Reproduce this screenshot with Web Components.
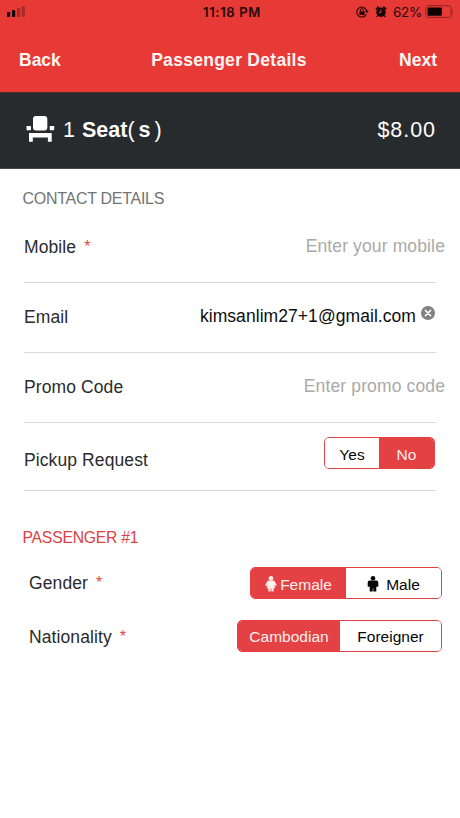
<!DOCTYPE html>
<html lang="en">
<head>
<meta charset="utf-8">
<title>Passenger Details</title>
<style>
  html, body { margin: 0; background: #fff; }
  body { font-family: "Liberation Sans", Arial, sans-serif; }
</style>
</head>
<body>
<booking-screen></booking-screen>
<script>
const define = (name, html) => {
  const tpl = document.createElement('template');
  tpl.innerHTML = html;
  customElements.define(name, class extends HTMLElement {
    constructor() {
      super();
      this.attachShadow({ mode: 'open' }).appendChild(tpl.content.cloneNode(true));
    }
  });
};

define('status-bar', `
<style>
  :host { display: grid; grid-template-columns: 1fr auto 1fr; height: 24px; align-items: center;
    padding: 0 6px 0 7px; box-sizing: border-box; color: #250807; font-family: Inter, sans-serif; }
  svg { display: block; }
  .time { font-size: 13px; font-weight: 600; letter-spacing: .68px; line-height: 24px; margin-left: 3px; }
  .right { display: flex; justify-content: flex-end; align-items: center; }
  .pct { font-size: 13.5px; letter-spacing: -.25px; margin: 0 3px 0 6px; line-height: 24px; }
</style>
<svg width="19" height="24" viewBox="0 0 19 24"><g fill="#150303"><rect y="12" width="3.2" height="5" rx=".7"/><rect x="5" y="10" width="3.2" height="7" rx=".7"/></g><g fill="#aa2a28"><rect x="10" y="8" width="3.2" height="9" rx=".7"/><rect x="14.7" y="6" width="3.2" height="11" rx=".7"/></g></svg>
<span class="time">11:18 PM</span>
<span class="right">
  <svg width="14" height="24" viewBox="0 0 14 24" fill="none" stroke="#250807"><path d="M11.3 14.2A5 5 0 1 1 11.7 11" stroke-width="1.1"/><path d="M10 10.6h3.8l-1.9 2.6z" fill="#250807" stroke="none"/><rect x="4.4" y="11.2" width="5.2" height="3.8" rx=".5" fill="#250807" stroke="none"/><path d="M5.4 11.4v-1.2a1.6 1.6 0 0 1 3.2 0v1.2" stroke-width="1"/></svg>
  <svg width="12" height="24" viewBox="0 0 12 24" style="margin-left:6px"><circle cx="6" cy="12.2" r="4.7" fill="#150303"/><path d="M1.4 8.9 3.3 7.2M10.6 8.9 8.7 7.2" stroke="#150303" stroke-width="1.7" stroke-linecap="round"/><path d="M2.6 15.5 1.8 17M9.4 15.5l.8 1.5" stroke="#150303" stroke-width="1.2"/><path d="M6 9.3v3.2H3.9" fill="none" stroke="#e73a37" stroke-width="1"/></svg>
  <span class="pct">62%</span>
  <svg width="29" height="24" viewBox="0 0 29 24"><rect x=".9" y="5.7" width="25.2" height="11.7" rx="2.6" fill="none" stroke="#8c2221" stroke-width="1"/><rect x="2.6" y="7.4" width="14.2" height="8.3" rx=".8" fill="#100202"/><path d="M27.3 9.6a2.4 2.4 0 0 1 0 3.8z" fill="#8c2221"/></svg>
</span>`);

define('nav-bar', `
<style>
  :host { display: flex; justify-content: space-between; align-items: center; height: 68px;
    padding: 3px 23px 0 19px; box-sizing: border-box; color: #fff5f2; font-size: 17.5px; font-weight: 700; }
  span { line-height: 24px; }
  .t { letter-spacing: .28px; margin-right: 2px; }
</style>
<span><slot name="back"></slot></span><span class="t"><slot></slot></span><span><slot name="next"></slot></span>`);

define('seat-summary', `
<style>
  :host { display: flex; align-items: center; height: 77px; padding: 0 24px 0 26px; box-sizing: border-box;
    background: #282b2e; color: #fff; font-size: 21.5px; border-top: 1px solid #55292a; border-bottom: 1px solid #46494c; }
  svg { margin: 0 8px 3px 0; }
  span { line-height: 26px; white-space: pre; }
  .seat, .price { margin-bottom: 2px; }
  .seat { flex: 1; }
  .price { letter-spacing: .95px; }
</style>
<svg width="29" height="28" viewBox="0 0 29 28" fill="#fff"><rect x="7" y="1" width="14.3" height="14.5" rx="3"/><rect x=".5" y="11" width="4.5" height="4.2" rx=".6"/><rect x="23.7" y="11" width="4.5" height="4.2" rx=".6"/><path d="M3 18h22.7v8.7h-3.8v-4.2H6.8v4.2H3z"/></svg>
<span class="seat"><slot></slot></span><span class="price"><slot name="price"></slot></span>`);

define('section-title', `
<style>
  :host { display: block; box-sizing: border-box; padding-left: 22.5px; font-size: 16px; letter-spacing: -.28px; line-height: 20px; color: #747474; }
  :host([accent]) { color: #db4043; }
</style><slot></slot>`);

define('form-row', `
<style>
  :host { display: flex; justify-content: space-between; align-items: center; box-sizing: border-box;
    height: 70px; margin: 0 24px 0 24px; border-bottom: 1px solid #d9d9d9; color: #2b2b2b; font-size: 17.5px; }
  :host([plain]) { border-bottom: 0; margin: 0 18px 0 29px; height: 54px; }
  .label { line-height: 22px; letter-spacing: .1px; padding-top: var(--label-shift, 0px); padding-bottom: var(--label-lift, 0px); }
  i { font-style: normal; color: #e0484a; margin-left: 8px; font-size: 16px; line-height: 1; vertical-align: 1.5px; display: none; }
  :host([required]) i { display: inline; }
  .value { display: flex; }
</style>
<span class="label"><slot name="label"></slot><i>*</i></span><span class="value"><slot></slot></span>`);

define('text-field', `
<style>
  :host { display: flex; align-items: center; line-height: 22px; color: #0d0d0d; font-size: 17.5px;
    letter-spacing: .06px; margin-bottom: var(--field-lift, 2px); }
  :host([placeholder]) { color: #a9a9a9; margin-right: -9px; letter-spacing: .13px; }
  svg { display: none; margin: -6px 1px 0 5px; }
  :host([clearable]) svg { display: block; }
</style>
<span><slot></slot></span>
<svg width="14" height="14" viewBox="0 0 14 14"><circle cx="7" cy="7" r="7" fill="#808080"/><path d="m4.4 4.4 5.2 5.2m0-5.2-5.2 5.2" stroke="#fff" stroke-width="1.5" stroke-linecap="round"/></svg>`);

define('segmented-control', `
<style>
  :host { display: flex; box-sizing: border-box; height: 32px; border: 1px solid #e34143; border-radius: 5px; overflow: hidden; }
</style><slot></slot>`);

define('segment-option', `
<style>
  :host { display: flex; align-items: center; justify-content: center; width: var(--w); color: #050505;
    background: #fff; font-size: 15.5px; line-height: 20px; box-sizing: border-box; padding-top: var(--text-shift, 3px); }
  :host([selected]) { background: #e34143; color: #fff0ed; }
</style><slot></slot>`);

define('person-icon', `
<style>
  :host { display: block; margin: -1px var(--gap, 3px) 0 0; }
  svg { display: block; } .f, .m { display: none; }
  :host([kind=female]) .f, :host([kind=male]) .m { display: inline; }
</style>
<svg width="12" height="16" viewBox="0 0 12 16" fill="currentColor">
 <g class="f"><circle cx="6" cy="2.3" r="2.3"/><path d="M4 4.5h4c.9 0 1.4.4 1.7 1l2.1 3.8-1.6 1-1.4-2.1 1.5 4H8.6V15.5H6.4v-3.1h-.8v3.1H3.4v-3.3H1.7l1.5-4-1.4 2.1-1.6-1 2.1-3.8c.3-.6.8-1 1.7-1z"/></g>
 <g class="m"><circle cx="6" cy="2.3" r="2.3"/><path d="M2.7 4.5h6.6a2 2 0 0 1 2 2v4.2H9.3v4.9H6.3v-3h-.6v3H2.7v-4.9H.7V6.5a2 2 0 0 1 2-2z"/></g>
</svg>`);

define('booking-screen', `
<style>
  :host { display: flex; flex-direction: column; width: 460px; height: 818px; background: #fff; overflow: hidden; }
  header { background: #e73a37; }
  .contact { padding-top: 20px; height: 43px; box-sizing: border-box; }
  .passenger { padding-top: 37px; height: 65px; box-sizing: border-box; font-size: 15.7px; letter-spacing: -.2px; }
  .s1 { margin: 0 7px 0 0; } .s2 { margin: 0 4px 0 0; } .s3 { margin-left: 4px; }
</style>
<header><status-bar></status-bar>
<nav-bar><span slot="back">Back</span>Passenger Details<span slot="next">Next</span></nav-bar></header>
<seat-summary><span class="s1">1</span><b>Seat</b><span class="s2">(</span><b>s</b><span class="s3">)</span><span slot="price">$8.00</span></seat-summary>
<main>
<section-title class="contact">CONTACT DETAILS</section-title>
<form-row required style="height:71px"><span slot="label">Mobile</span><text-field placeholder>Enter your mobile</text-field></form-row>
<form-row style="--label-lift:2px;--field-lift:3px"><span slot="label">Email</span><text-field clearable>kimsanlim27+1@gmail.com</text-field></form-row>
<form-row style="--label-lift:2px;--field-lift:4px"><span slot="label">Promo Code</span><text-field placeholder>Enter promo code</text-field></form-row>
<form-row style="height:68px;--label-shift:6px"><span slot="label">Pickup Request</span>
  <segmented-control style="margin:0 1px 7px 0"><segment-option style="--w:54px">Yes</segment-option><segment-option selected style="--w:55px">No</segment-option></segmented-control></form-row>
<section-title accent class="passenger">PASSENGER #1</section-title>
<form-row plain required><span slot="label">Gender</span>
  <segmented-control><segment-option selected style="--w:95px"><person-icon kind="female"></person-icon>Female</segment-option><segment-option style="--w:95px"><person-icon kind="male" style="--gap:7px"></person-icon>Male</segment-option></segmented-control></form-row>
<form-row plain required><span slot="label">Nationality</span>
  <segmented-control style="margin-bottom:2px;--text-shift:1px"><segment-option selected style="--w:102px">Cambodian</segment-option><segment-option style="--w:101px">Foreigner</segment-option></segmented-control></form-row>
</main>`);
</script>
</body>
</html>
